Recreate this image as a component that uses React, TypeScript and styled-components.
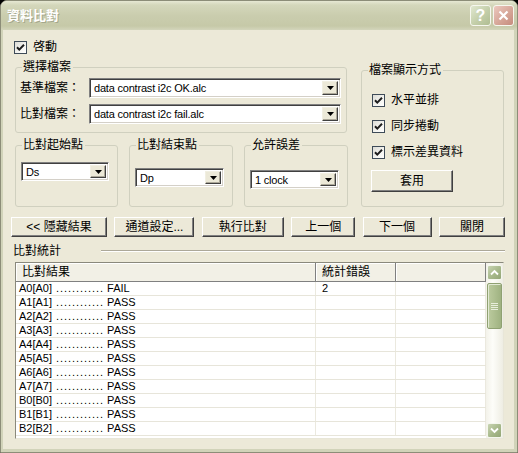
import React from 'react';
import styled, { createGlobalStyle } from 'styled-components';

const GlobalStyle = createGlobalStyle`
  html, body {
    margin: 0;
    padding: 0;
    background: #000;
  }
  body {
    font-family: "Liberation Sans", "Noto Sans CJK TC", sans-serif;
    font-size: 12px;
    color: #000;
  }
  * {
    box-sizing: border-box;
  }
`;

const Window = styled.div`
  width: 518px;
  height: 453px;
  display: flex;
  flex-direction: column;
  background: #ece9d8;
  border: 1px solid #8c8d78;
  border-radius: 7px 7px 0 0;
  overflow: hidden;
`;

const TitleBar = styled.div`
  height: 29px;
  flex: none;
  display: flex;
  align-items: center;
  padding: 0 3px 0 6px;
  background: linear-gradient(
    to bottom,
    #e6e8d3 0%,
    #d4d7bb 14%,
    #cacdae 50%,
    #c6c9a8 86%,
    #d3d5bb 100%
  );
`;

const TitleText = styled.div`
  flex: 1;
  color: #fff;
  font-weight: bold;
  font-size: 13px;
  line-height: 16px;
  text-shadow: 1px 1px 0 #a4a78c;
`;

const TitleButton = styled.div<{ $kind: 'help' | 'close' }>`
  width: 21px;
  height: 21px;
  margin-left: 2px;
  border: 1px solid #f6f7ef;
  border-radius: 3px;
  display: flex;
  align-items: center;
  justify-content: center;
  color: #fff;
  font-weight: bold;
  font-size: 16px;
  line-height: 16px;
  background: ${(p) =>
    p.$kind === 'help'
      ? 'linear-gradient(135deg, #e1e8d0 0%, #c3cea9 55%, #b0bd92 100%)'
      : 'linear-gradient(135deg, #ecc9bf 0%, #d6a698 55%, #c68c7d 100%)'};
`;

const Body = styled.div`
  flex: 1;
  display: flex;
  flex-direction: column;
  border-left: 2px solid #d1d3b9;
  border-right: 3px solid #d1d3b9;
  border-bottom: 3px solid #d1d3b9;
  padding: 0 10px 0 12px;
`;

const CheckRow = styled.label<{ $indent?: number }>`
  display: flex;
  align-items: center;
  gap: 6px;
  height: 13px;
  line-height: 13px;
  margin-left: ${(p) => p.$indent ?? 0}px;
`;

const TopCheck = styled(CheckRow)`
  margin-top: 11px;
`;

const Box = styled.span`
  width: 13px;
  height: 13px;
  flex: none;
  border: 1px solid #3e4b58;
  background: linear-gradient(135deg, #dcdcd6 0%, #f4f4f0 60%, #fff 100%);
  display: flex;
  align-items: center;
  justify-content: center;
`;

const TopArea = styled.div`
  display: flex;
  gap: 14px;
  margin-top: 13px;
  height: 140px;
`;

const LeftColumn = styled.div`
  width: 332px;
  display: flex;
  flex-direction: column;
`;

const Group = styled.div`
  position: relative;
  border: 1px solid #d0d0bf;
  border-radius: 3px;
`;

const Legend = styled.span`
  position: absolute;
  top: -8px;
  left: 6px;
  padding: 0 2px 0 1px;
  background: #ece9d8;
  line-height: 14px;
  white-space: nowrap;
`;

const FileGroup = styled(Group)`
  height: 66px;
  padding: 10px 5px 0 4px;
  display: flex;
  flex-direction: column;
  gap: 6px;
`;

const FileRow = styled.div`
  display: flex;
  align-items: center;
  height: 20px;
`;

const FileLabel = styled.span`
  width: 69px;
  flex: none;
  line-height: 14px;
`;

const SmallGroups = styled.div`
  display: grid;
  grid-template-columns: 103px 104px 104px;
  gap: 11px;
  margin-top: 12px;
  flex: 1;
`;

const SmallGroup = styled(Group)<{ $comboTop: number }>`
  padding: ${(p) => p.$comboTop}px 8px 0 5px;
`;

const ViewGroup = styled(Group)`
  width: 143px;
  margin-top: 3px;
  padding: 23px 0 0 10px;
  display: flex;
  flex-direction: column;
  gap: 13px;
`;

const Combo = styled.div<{ $h: number }>`
  display: flex;
  height: ${(p) => p.$h}px;
  flex: 1;
  background: #fff;
  border: 1px solid;
  border-color: #808080 #fff #fff #808080;
  box-shadow: inset 1px 1px 0 #404040, inset -1px -1px 0 #d4d0c8;
  padding: 2px;
`;

const ComboValue = styled.span`
  flex: 1;
  padding-left: 2px;
  font-size: 11px;
  line-height: 14px;
  letter-spacing: -0.2px;
  white-space: nowrap;
  overflow: hidden;
`;

const ComboButton = styled.span`
  width: 16px;
  flex: none;
  display: flex;
  align-items: center;
  justify-content: center;
  background: #ece9d8;
  border: 1px solid;
  border-color: #f1efe2 #404040 #404040 #f1efe2;
  box-shadow: inset -1px -1px 0 #aca899;
`;

const PushButton = styled.div<{ $w: number; $h?: number }>`
  width: ${(p) => p.$w}px;
  height: ${(p) => p.$h ?? 20}px;
  display: flex;
  align-items: center;
  justify-content: center;
  background: #ece9d8;
  border: 1px solid;
  border-color: #fff #404040 #404040 #fff;
  box-shadow: inset -1px -1px 0 #808080;
  line-height: 14px;
  white-space: nowrap;
`;

const ApplyButton = styled(PushButton)`
  margin-top: -2px;
  margin-left: -1px;
`;

const ButtonRow = styled.div`
  display: flex;
  justify-content: space-between;
  margin: 10px -1px 0 -4px;
`;

const StatsHeader = styled.div`
  display: flex;
  align-items: center;
  height: 14px;
  margin: 7px -1px 0 -2px;
`;

const StatsLabel = styled.span`
  line-height: 14px;
`;

const StatsLine = styled.span`
  flex: 1;
  margin-left: 40px;
  border-top: 1px solid #aca899;
  border-bottom: 1px solid #fff;
`;

const ListView = styled.div`
  margin-top: 4px;
  height: 177px;
  display: flex;
  border: 1px solid;
  border-color: #8a897c #e8e6d8 #e8e6d8 #8a897c;
  background: #fff;
`;

const Table = styled.div`
  flex: 1;
  display: flex;
  flex-direction: column;
  overflow: hidden;
`;

const COLS = '300px 80px 1fr';

const HeaderRow = styled.div`
  display: grid;
  grid-template-columns: ${COLS};
  height: 19px;
  flex: none;
`;

const HeaderCell = styled.div`
  background: #f2f0e6;
  border-right: 1px solid #808080;
  border-bottom: 1px solid #808080;
  box-shadow: inset 1px 1px 0 #fff;
  padding-left: 6px;
  line-height: 18px;
  white-space: nowrap;
`;

const Row = styled.div`
  display: grid;
  grid-template-columns: ${COLS};
  height: 14px;
  flex: none;
  border-bottom: 1px solid #e7e5da;
`;

const Cell = styled.div<{ $pad?: number }>`
  border-right: 1px solid #ebe9df;
  padding-left: ${(p) => p.$pad ?? 3}px;
  font-size: 11px;
  line-height: 13px;
  white-space: nowrap;
  overflow: hidden;
`;

const Dots = styled.span`
  letter-spacing: 0.95px;
  margin: 0 3px 0 4px;
`;

const ScrollBar = styled.div`
  width: 17px;
  flex: none;
  display: flex;
  flex-direction: column;
  align-items: center;
  padding: 2px 0 0 0;
  background: linear-gradient(to right, #f3f2ea 0%, #fdfdf9 40%, #eeede3 100%);
`;

const ScrollArrow = styled.div<{ $bottom?: boolean }>`
  width: 15px;
  height: 15px;
  flex: none;
  margin-top: ${(p) => (p.$bottom ? 'auto' : '0')};
  border: 1px solid #f4f6ee;
  border-radius: 2px;
  background: linear-gradient(135deg, #c8d4b2 0%, #a9ba8d 50%, #93a676 100%);
  display: flex;
  align-items: center;
  justify-content: center;
`;

const Thumb = styled.div`
  width: 15px;
  height: 46px;
  margin-top: 3px;
  border: 1px solid #8fa172;
  border-radius: 2px;
  background: linear-gradient(to right, #bccb9f 0%, #aebf90 50%, #9fb281 100%);
  box-shadow: inset 1px 1px 0 #e2e9d4;
  display: flex;
  flex-direction: column;
  align-items: center;
  justify-content: center;
  gap: 1px;
`;

const Grip = styled.span`
  width: 7px;
  height: 1px;
  background: #e8eedc;
`;

const Check = () => (
  <Box>
    <svg width="9" height="9" viewBox="0 0 9 9">
      <path d="M1 4.2 L3.3 6.6 L8 1.8" fill="none" stroke="#1e1e1e" strokeWidth="2" />
    </svg>
  </Box>
);

const DropArrow = () => (
  <svg width="7" height="4" viewBox="0 0 7 4">
    <path d="M0 0 H7 L3.5 4 Z" fill="#000" />
  </svg>
);

const ComboBox = ({ value, h = 20 }: { value: string; h?: number }) => (
  <Combo $h={h}>
    <ComboValue>{value}</ComboValue>
    <ComboButton>
      <DropArrow />
    </ComboButton>
  </Combo>
);

const Chevron = ({ up }: { up?: boolean }) => (
  <svg width="9" height="7" viewBox="0 0 9 7">
    <path
      d={up ? 'M1 5.5 L4.5 2 L8 5.5' : 'M1 1.5 L4.5 5 L8 1.5'}
      fill="none"
      stroke="#fff"
      strokeWidth="1.8"
    />
  </svg>
);

const rows = [
  { name: 'A0[A0]', state: 'FAIL', errors: '2' },
  { name: 'A1[A1]', state: 'PASS', errors: '' },
  { name: 'A2[A2]', state: 'PASS', errors: '' },
  { name: 'A3[A3]', state: 'PASS', errors: '' },
  { name: 'A4[A4]', state: 'PASS', errors: '' },
  { name: 'A5[A5]', state: 'PASS', errors: '' },
  { name: 'A6[A6]', state: 'PASS', errors: '' },
  { name: 'A7[A7]', state: 'PASS', errors: '' },
  { name: 'B0[B0]', state: 'PASS', errors: '' },
  { name: 'B1[B1]', state: 'PASS', errors: '' },
  { name: 'B2[B2]', state: 'PASS', errors: '' },
];

const buttons = [
  { label: '<< 隱藏結果', w: 96 },
  { label: '通道設定...', w: 80 },
  { label: '執行比對', w: 82 },
  { label: '上一個', w: 64 },
  { label: '下一個', w: 69 },
  { label: '關閉', w: 66 },
];

const App = () => {
  return (
    <>
      <GlobalStyle />
      <Window>
        <TitleBar>
          <TitleText>資料比對</TitleText>
          <TitleButton $kind="help">?</TitleButton>
          <TitleButton $kind="close">
            <svg width="11" height="11" viewBox="0 0 11 11">
              <path d="M1.5 1.5 L9.5 9.5 M9.5 1.5 L1.5 9.5" stroke="#fff" strokeWidth="2.2" />
            </svg>
          </TitleButton>
        </TitleBar>

        <Body>
          <TopCheck $indent={-1}>
            <Check />
            <span>啓動</span>
          </TopCheck>

          <TopArea>
            <LeftColumn>
              <FileGroup>
                <Legend>選擇檔案</Legend>
                <FileRow>
                  <FileLabel>基準檔案：</FileLabel>
                  <ComboBox value="data contrast i2c OK.alc" />
                </FileRow>
                <FileRow>
                  <FileLabel>比對檔案：</FileLabel>
                  <ComboBox value="data contrast i2c fail.alc" />
                </FileRow>
              </FileGroup>

              <SmallGroups>
                <SmallGroup $comboTop={16}>
                  <Legend>比對起始點</Legend>
                  <ComboBox value="Ds" h={19} />
                </SmallGroup>
                <SmallGroup $comboTop={22}>
                  <Legend>比對結束點</Legend>
                  <ComboBox value="Dp" h={19} />
                </SmallGroup>
                <SmallGroup $comboTop={24}>
                  <Legend>允許誤差</Legend>
                  <ComboBox value="1 clock" h={19} />
                </SmallGroup>
              </SmallGroups>
            </LeftColumn>

            <ViewGroup>
              <Legend>檔案顯示方式</Legend>
              <CheckRow>
                <Check />
                <span>水平並排</span>
              </CheckRow>
              <CheckRow>
                <Check />
                <span>同步捲動</span>
              </CheckRow>
              <CheckRow>
                <Check />
                <span>標示差異資料</span>
              </CheckRow>
              <ApplyButton $w={82} $h={22}>
                套用
              </ApplyButton>
            </ViewGroup>
          </TopArea>

          <ButtonRow>
            {buttons.map((b) => (
              <PushButton key={b.label} $w={b.w}>
                {b.label}
              </PushButton>
            ))}
          </ButtonRow>

          <StatsHeader>
            <StatsLabel>比對統計</StatsLabel>
            <StatsLine />
          </StatsHeader>

          <ListView>
            <Table>
              <HeaderRow>
                <HeaderCell>比對結果</HeaderCell>
                <HeaderCell>統計錯誤</HeaderCell>
                <HeaderCell />
              </HeaderRow>
              {rows.map((r) => (
                <Row key={r.name}>
                  <Cell>
                    {r.name}
                    <Dots>............</Dots>
                    {r.state}
                  </Cell>
                  <Cell $pad={6}>{r.errors}</Cell>
                  <Cell />
                </Row>
              ))}
            </Table>
            <ScrollBar>
              <ScrollArrow>
                <Chevron up />
              </ScrollArrow>
              <Thumb>
                <Grip />
                <Grip />
                <Grip />
                <Grip />
              </Thumb>
              <ScrollArrow $bottom>
                <Chevron />
              </ScrollArrow>
            </ScrollBar>
          </ListView>
        </Body>
      </Window>
    </>
  );
};

export default App;
